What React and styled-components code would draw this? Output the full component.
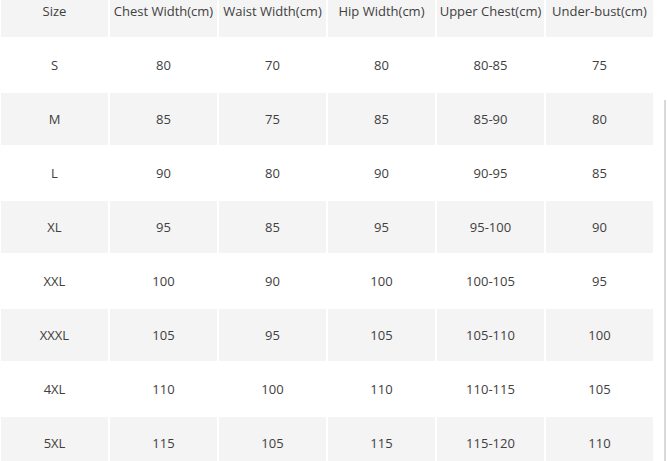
import React from "react"
import styled, { createGlobalStyle } from "styled-components"

const GlobalStyle = createGlobalStyle`
  html, body {
    margin: 0;
    padding: 0;
    background: #fff;
    overflow: hidden;
  }
  body {
    font-family: "Open Sans", "Liberation Sans", sans-serif;
  }
`

const headers = [
  "Size",
  "Chest Width(cm)",
  "Waist Width(cm)",
  "Hip Width(cm)",
  "Upper Chest(cm)",
  "Under-bust(cm)",
]

const rows = [
  ["S", "80", "70", "80", "80-85", "75"],
  ["M", "85", "75", "85", "85-90", "80"],
  ["L", "90", "80", "90", "90-95", "85"],
  ["XL", "95", "85", "95", "95-100", "90"],
  ["XXL", "100", "90", "100", "100-105", "95"],
  ["XXXL", "105", "95", "105", "105-110", "100"],
  ["4XL", "110", "100", "110", "110-115", "105"],
  ["5XL", "115", "105", "115", "115-120", "110"],
]

const App = () => {
  return (
    <>
      <GlobalStyle />
      <Page>
        <TableWrap>
          <Grid>
            {headers.map((h) => (
              <Cell key={h} $shaded>
                {h}
              </Cell>
            ))}
            {rows.map((row, i) =>
              row.map((v, j) => (
                <Cell key={`${i}-${j}`} $shaded={i % 2 === 1}>
                  {v}
                </Cell>
              ))
            )}
          </Grid>
        </TableWrap>
        <ScrollTrack>
          <Thumb />
        </ScrollTrack>
      </Page>
    </>
  )
}

const Page = styled.div`
  display: flex;
  width: 667px;
  height: 461px;
  overflow: hidden;
`

const TableWrap = styled.div`
  width: 664px;
  flex: none;
`

const Grid = styled.div`
  display: grid;
  grid-template-columns: repeat(6, 107px);
  grid-auto-rows: 52px;
  gap: 2px;
  padding-left: 1px;
  margin-top: -15px;
`

const Cell = styled.div`
  display: flex;
  align-items: center;
  justify-content: center;
  background: ${(p) => (p.$shaded ? "#f4f4f4" : "#fff")};
  color: #404040;
  font-size: 13px;
  white-space: nowrap;
`

const ScrollTrack = styled.div`
  width: 3px;
  flex: none;
  display: flex;
  flex-direction: column;
  padding-top: 100px;
`

const Thumb = styled.div`
  width: 2px;
  flex: 1;
  background: #d9d9d9;
`

export default App
